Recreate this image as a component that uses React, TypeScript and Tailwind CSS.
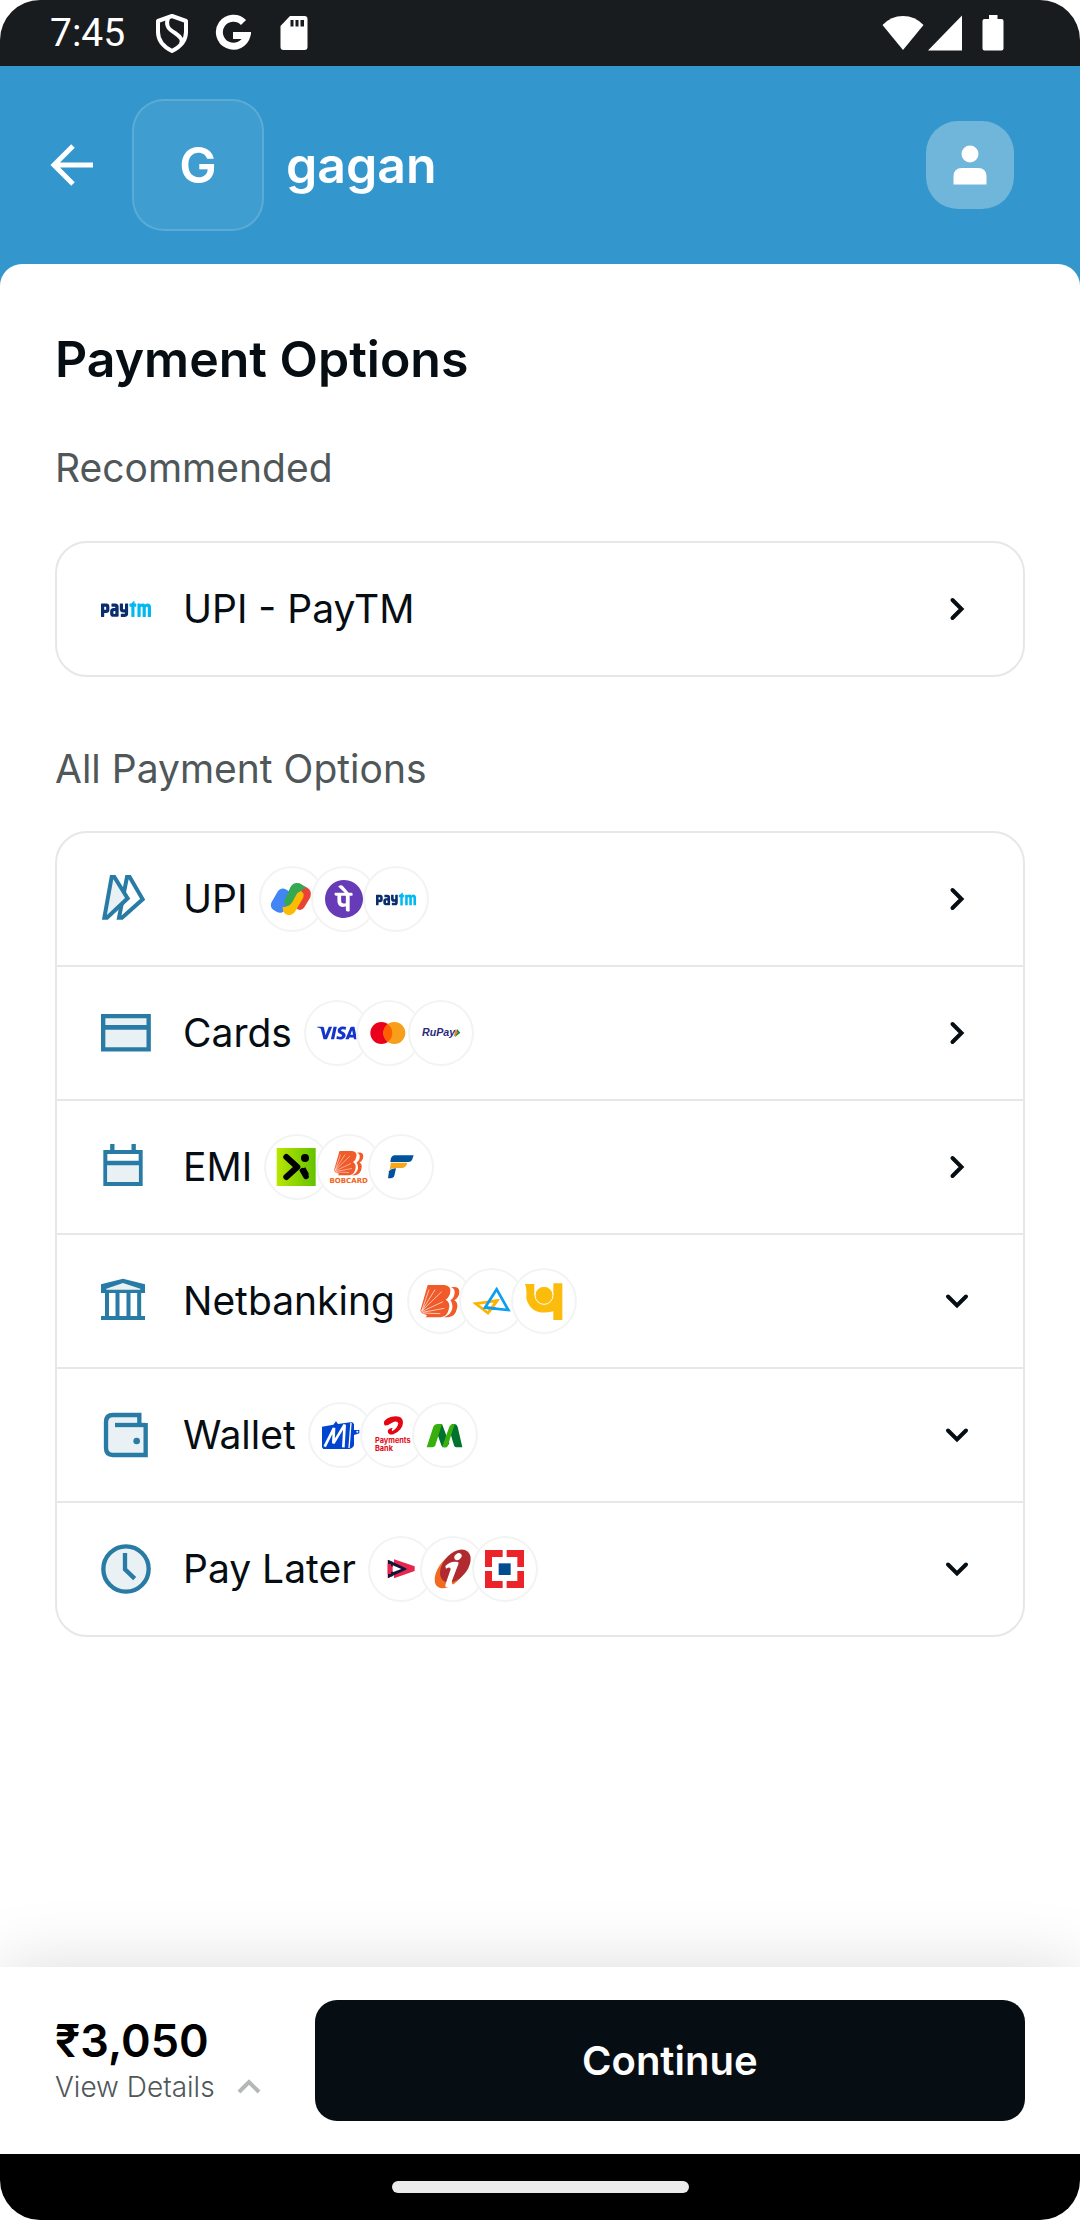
import type { ReactNode } from "react";
import { SiPaytm, SiPhonepe, SiVisa } from "react-icons/si";

const TEAL = "#287ba5";
const TINT = "#e9f1f5";

/* ---------- status bar icons ---------- */

function StatusBar() {
  return (
    <div className="flex h-[66px] items-center justify-between rounded-t-[40px] bg-[#191c1f] pr-[76px] pl-[50px] text-white">
      <div className="flex items-center">
        <span className="font-[Roboto,sans-serif] text-[39px] leading-[44px]">7:45</span>
        <svg className="ml-[30px]" width="34" height="40" viewBox="0 0 34 40" fill="none" stroke="#fff" strokeWidth="4">
          <path d="M17 3 31 8V19C31 28 25 34 17 38 9 34 3 28 3 19V8Z" strokeLinejoin="round" />
          <path d="M13 5C10 14 15 17 20 20 26 24 28 27 26 31" strokeWidth="4" />
        </svg>
        <svg className="ml-[26px]" width="36" height="40" viewBox="0 0 36 40" fill="none" stroke="#fff" strokeWidth="7">
          <path d="M28.500 9.500A14 14 0 1 0 32 22.500H18" />
        </svg>
        <svg className="ml-[29px]" width="28" height="36" viewBox="0 0 28 36">
          <path d="M10 1H24.500Q27.500 1 27.500 4V32Q27.500 35 24.500 35H3.500Q.5 35 .5 32V11Z" fill="#fff" />
          <path d="M10.500 5H13.500V11.500H10.500ZM15.500 5H18.500V11.500H15.500ZM20.500 5H24V11.500H20.500Z" fill="#191c1f" />
        </svg>
      </div>
      <div className="flex items-center">
        <svg width="42" height="36" viewBox="0 0 42 36">
          <path d="M21 35 .5 10Q9 1 21 1T41.500 10Z" fill="#fff" />
        </svg>
        <svg className="ml-1" width="34" height="36" viewBox="0 0 34 36">
          <path d="M34 .5V35.500H0Z" fill="#fff" />
        </svg>
        <svg className="ml-5" width="22" height="36" viewBox="0 0 22 36">
          <path d="M7 0H15.500V4H19.500Q21.500 4 21.500 6V33.500Q21.500 35.500 19.500 35.500H2.500Q.5 35.500 .5 33.500V6Q.5 4 2.500 4H7Z" fill="#fff" />
        </svg>
      </div>
    </div>
  );
}

/* ---------- category icons, 150-unit box ---------- */

function CategoryIcon({ children }: { children: ReactNode }) {
  return (
    <svg className="size-[50px] shrink-0" viewBox="0 0 150 150" fill="none" stroke={TEAL} strokeWidth="12" aria-hidden="true">
      {children}
    </svg>
  );
}

const upiIcon = (
  <CategoryIcon>
    <path d="M78 9H86L125 76 63 131H54Z" fill="#fff" />
    <path d="M32 9H40L80 73 18 131H10Z" fill={TINT} />
  </CategoryIcon>
);
const cardIcon = (
  <CategoryIcon>
    <path d="M6.500 24.500H143V124H6.500Z" fill={TINT} strokeWidth="13" />
    <path d="M6 58H143" strokeWidth="14" />
  </CategoryIcon>
);
const calendarIcon = (
  <CategoryIcon>
    <path d="M13 30H119V126H13Z" fill="#fff" />
    <path d="M19 64H113V120H19Z" fill={TINT} stroke="none" />
    <path d="M13 63H119M34 6V30M98 6V30" strokeWidth="13" />
  </CategoryIcon>
);
const bankIcon = (
  <CategoryIcon>
    <path d="M18 48H115V120H18Z" fill="#fff" stroke="none" />
    <path d="M0 25 66 8 132 25V51H0Z" fill={TEAL} stroke="none" />
    <path d="M16 41V38L66 21 118 38V41Z" fill={TINT} stroke="none" />
    <path d="M0 126H132M18 48V122M49.500 48V122M82.500 48V122M114.500 48V122" />
  </CategoryIcon>
);
const walletIcon = (
  <CategoryIcon>
    <path d="M114 48V15H36Q15 15 15 36V114Q15 135 36 135H134V48Z" fill={TINT} stroke="none" />
    <path d="M115 48V15H36Q15 15 15 36V114Q15 135 36 135H134V39" strokeWidth="13" />
    <path d="M134 45H42" strokeWidth="13" />
    <circle cx="107" cy="93" r="10" fill={TEAL} stroke="none" />
  </CategoryIcon>
);
const clockIcon = (
  <CategoryIcon>
    <circle cx="75" cy="75" r="68" fill={TINT} strokeWidth="13" />
    <path d="M72 27V76L101 104" strokeWidth="13" />
  </CategoryIcon>
);

/* ---------- brand logos, 198-unit box inside a ringed circle ---------- */

/* Two-tone fill shared by every Paytm wordmark on the page. */
function PaytmTones() {
  return (
    <svg className="absolute size-0" aria-hidden="true">
      <defs>
        <linearGradient id="paytm-tones" x1="0" x2="1" y1="0" y2="0">
          <stop offset=".55" stopColor="#0a2d6e" />
          <stop offset=".55" stopColor="#00b9f1" />
        </linearGradient>
      </defs>
    </svg>
  );
}

function Paytm({ size }: { size: number }) {
  return <SiPaytm size={size} fill="url(#paytm-tones)" stroke="none" aria-hidden="true" />;
}

function Logo({ children }: { children: ReactNode }) {
  return (
    <svg className="size-[66px]" viewBox="0 0 198 198" aria-hidden="true">
      {children}
    </svg>
  );
}

const gpay = (
  <Logo>
    <rect x="44" y="68" width="46" height="72" rx="17" transform="rotate(30 67 104)" fill="#4285f4" />
    <path d="M112 62 120 52 146 66Q160 76 154 94L137 122Q129 136 116 130 108 124 113 114L128 84Q130 72 112 62Z" fill="#ea4335" />
    <path d="M76 104 94 64Q103 47 121 52L144 66Q128 66 120 84L104 114 88 122Q74 118 76 104Z" fill="#34a853" />
    <path d="M71 123Q90 124 100 108L113 84Q120 74 130 79 137 85 132 96L109 136Q100 150 84 146 70 140 71 123Z" fill="#fbbc04" />
  </Logo>
);

const phonepe = <SiPhonepe size={38} color="#673ab7" stroke="none" aria-hidden="true" />;
const paytm = <Paytm size={40} />;
const visa = <SiVisa size={40} color="#1434cb" stroke="none" aria-hidden="true" />;

const mastercard = (
  <Logo>
    <circle cx="76" cy="99" r="33" fill="#eb001b" />
    <circle cx="115" cy="99" r="33" fill="#f79e1b" />
    <path d="M95.500 72.500A33 33 0 0 1 95.500 125.500 33 33 0 0 1 95.500 72.500Z" fill="#ff5f00" />
  </Logo>
);

const rupay = (
  <Logo>
    <text x="42" y="109" fontFamily="Liberation Sans, sans-serif" fontSize="32" fontWeight="700" fontStyle="italic" fill="#2a2a7c">
      RuPay
    </text>
    <path d="M147 87 157 98 141 111Z" fill="#0e8a43" />
    <path d="M143 87 150 98 137 111Z" fill="#f47b20" />
  </Logo>
);

const axio = (
  <Logo>
    <defs>
      <linearGradient id="lime" x1="0" x2="1">
        <stop offset="0" stopColor="#b9e700" />
        <stop offset="1" stopColor="#64c200" />
      </linearGradient>
    </defs>
    <rect x="38" y="42" width="117" height="114" fill="url(#lime)" />
    <path d="M67 69 100 99 67 129" fill="none" stroke="#000" strokeWidth="18" strokeLinecap="round" strokeLinejoin="round" />
    <circle cx="123" cy="72" r="12" fill="#000" />
    <path d="M116 110 126 127" stroke="#000" strokeWidth="17" strokeLinecap="round" />
    <path d="M106 110 124 100 136 122Z" fill="#000" />
  </Logo>
);

/* Two overlapping slanted letters with a sunburst at the lower left. */
function BarodaSun() {
  return (
    <>
      <path d="M92 7Q118 2 117 22 116 38 102 46 114 52 110 70 106 94 84 97H70Q92 90 96 70 97 54 90 46 104 36 103 20 102 10 92 7Z" fill="#f15a29" />
      <path d="M22 0H72Q92 2 90 20 88 36 76 44 90 52 86 70 82 94 62 97H16L20 91 5 85 0 77Z" fill="#f15a29" />
      <path d="M4 78 26 14M4 78 44 14M4 78 64 20M4 80 68 50M6 82 72 70M8 84 60 86" stroke="#fff" strokeWidth="2" />
    </>
  );
}

const bobcard = (
  <Logo>
    <g transform="translate(54 51) scale(.75)">
      <BarodaSun />
    </g>
    <text x="98" y="147" textAnchor="middle" fontFamily="DejaVu Sans, sans-serif" fontSize="21" fontWeight="700" fill="#f26522">
      BOBCARD
    </text>
  </Logo>
);

const federal = (
  <Logo>
    <path d="M78 64H137L132 78Q129 84 121 84H67Q68 66 78 64Z" fill="#00529b" />
    <path d="M69 86H118Q114 102 100 102H80Q68 102 64 112Z" fill="#faa61a" />
    <path d="M63 112Q70 103 84 103L79 125Q76 134 60 133Z" fill="#00529b" />
  </Logo>
);

const baroda = (
  <Logo>
    <g transform="translate(40 51)">
      <BarodaSun />
    </g>
  </Logo>
);

const canara = (
  <Logo>
    <path d="M50 107 114 98 87 135Z" fill="none" stroke="#ffb300" strokeWidth="8" />
    <path d="M113 64 78 119 148 126Z" fill="none" stroke="#0a9ff0" strokeWidth="8" />
    <path d="M90 131 114 98 98 100" fill="none" stroke="#ffb300" strokeWidth="8" />
    <path d="M82 119 110 122" stroke="#0a9ff0" strokeWidth="8" />
  </Logo>
);

const pnb = (
  <Logo>
    <path d="M42 48H70V80A29 29 0 0 0 127 80V46H154V156H127V130Q62 146 46 92 48 62 42 48Z" fill="#fbbc0b" />
    <circle cx="99" cy="82" r="27" fill="#fbbc0b" stroke="#fff" strokeWidth="3" />
  </Logo>
);

const mobikwik = (
  <Logo>
    <path d="M42 74 76 68 84 58 90 66 132 60 138 66V130Q134 140 124 141H46L42 136Z" fill="#0044cf" />
    <path d="M50 134 78 78 76 124 110 68 106 136" fill="none" stroke="#fff" strokeWidth="8" />
    <path d="M129 62 123 138" stroke="#fff" strokeWidth="4" />
    <path d="M136 84H154V94L136 100Z" fill="#0044cf" />
    <circle cx="148" cy="89" r="3" fill="#fff" />
  </Logo>
);

const airtel = (
  <Logo>
    <path
      d="M72 66Q68 54 92 45 128 36 129 62 128 84 100 97 86 100 83 89 84 78 98 78 94 84 96 88 112 80 115 64 112 54 96 62 82 72 74 70Z"
      fill="#e40613"
    />
    <g fontFamily="Inter, sans-serif" fontSize="22" fontWeight="700" fill="#e40613">
      <text x="45" y="123">Payments</text>
      <text x="45" y="147">Bank</text>
    </g>
  </Logo>
);

const greenM = (
  <Logo>
    <path d="M78 66H90L112 124 104 136H96Q90 136 88 130L72 84Z" fill="#00722f" />
    <path d="M120 66H128Q134 66 137 74L151 136H132Q128 136 126 130L112 84Z" fill="#00722f" />
    <path d="M44 136 64 74Q67 66 76 66H90L70 130Q68 136 60 136Z" fill="#37b00c" />
    <path d="M90 136 112 74Q115 66 124 66H128L108 130Q106 136 98 136Z" fill="#37b00c" />
  </Logo>
);

const lazypay = (
  <Logo>
    <path d="M59 72 74 77V121L59 127ZM78 70 140 91V105L78 127V114L118 99 78 84Z" fill="#e8254f" />
    <path d="M60 71 119 99 60 126V112L74 106V92L60 86ZM74 88V109L100 99Z" fill="#151338" fillRule="evenodd" />
    <path d="M59 84H69V114H59Z" fill="#e8254f" />
  </Logo>
);

const icici = (
  <Logo>
    <ellipse cx="94" cy="102" rx="36" ry="65" transform="rotate(40 94 102)" fill="#f26a21" />
    <ellipse cx="106" cy="90" rx="36" ry="57" transform="rotate(40 106 90)" fill="#b02a30" />
    <ellipse cx="114" cy="62" rx="12" ry="9" transform="rotate(-40 114 62)" fill="#fff" />
    <path d="M76 90Q92 74 114 78 118 82 112 92L96 134Q94 146 102 146 92 154 78 154 74 150 78 140L92 100Q92 90 78 98Z" fill="#fff" />
  </Logo>
);

const hdfc = (
  <Logo>
    <path d="M39 42H156V156H39Z" fill="#ed232a" />
    <path d="M60 63H136V135H60ZM92 42H104V63H92ZM92 135H104V156H92ZM39 93H60V105H39ZM136 93H156V105H136Z" fill="#fff" />
    <path d="M80 82H116V117H80Z" fill="#004c8f" />
  </Logo>
);

/* ---------- page parts ---------- */

function Chevron({ dir }: { dir: "right" | "down" }) {
  return (
    <svg className="ml-auto size-7 shrink-0" viewBox="0 0 28 28" fill="none" stroke="#060e13" strokeWidth="4" strokeLinecap="round" aria-hidden="true">
      <path d={dir === "right" ? "M9.500 5 18.500 14 9.500 23" : "M5 9.500 14 18.500 23 9.500"} />
    </svg>
  );
}

type Option = { label: string; icon: ReactNode; logos: ReactNode[]; dir: "right" | "down" };

const options: Option[] = [
  { label: "UPI", icon: upiIcon, logos: [gpay, phonepe, paytm], dir: "right" },
  { label: "Cards", icon: cardIcon, logos: [visa, mastercard, rupay], dir: "right" },
  { label: "EMI", icon: calendarIcon, logos: [axio, bobcard, federal], dir: "right" },
  { label: "Netbanking", icon: bankIcon, logos: [baroda, canara, pnb], dir: "down" },
  { label: "Wallet", icon: walletIcon, logos: [mobikwik, airtel, greenM], dir: "down" },
  { label: "Pay Later", icon: clockIcon, logos: [lazypay, icici, hdfc], dir: "down" },
];

function OptionRow({ label, icon, logos, dir }: Option) {
  return (
    <button type="button" className="flex h-[132px] w-full items-center pr-[52px] pl-11 text-left">
      {icon}
      <span className="ml-8 text-[39px] leading-[48px] text-[#060e13]">{label}</span>
      {logos.length > 0 && (
        <span className="ml-3 flex">
          {logos.map((logo, i) => (
            <span
              key={i}
              className="-ml-3.5 flex size-[66px] items-center justify-center rounded-full bg-white inset-ring-2 inset-ring-[#f2f3f3] first:ml-0"
            >
              {logo}
            </span>
          ))}
        </span>
      )}
      <Chevron dir={dir} />
    </button>
  );
}

export default function App() {
  return (
    <div className="flex min-h-screen flex-col bg-white font-[Inter,sans-serif]">
      <PaytmTones />
      <StatusBar />

      <header className="flex h-[198px] items-center bg-[#3397cd] pr-[66px] pl-[50px] text-white">
        <button type="button" aria-label="Back">
          <svg width="44" height="44" viewBox="0 0 44 44" fill="none" stroke="#fff" strokeWidth="5">
            <path d="M23 3 4 22 23 41M4 22H43" />
          </svg>
        </button>
        <div className="ml-[38px] flex size-[132px] items-center justify-center rounded-[32px] border-2 border-white/15 bg-white/6 text-[50px] leading-[60px] font-semibold">
          G
        </div>
        <div className="ml-[22px] text-[50px] leading-[60px] font-semibold">gagan</div>
        <button type="button" aria-label="Account" className="ml-auto flex size-[88px] items-center justify-center rounded-[32px] bg-[#70b5da]">
          <svg width="34" height="40" viewBox="0 0 34 40" fill="#fff">
            <circle cx="17" cy="9" r="8.500" />
            <path d="M.5 39.500V31.500Q.5 23 9 23H25Q33.500 23 33.500 31.500V39.500Z" />
          </svg>
        </button>
      </header>

      <main className="flex flex-1 flex-col bg-[#3397cd]">
        <div className="flex-1 rounded-t-[22px] bg-white px-[55px] pt-[63px]">
          <h1 className="text-[50px] leading-[64px] font-semibold text-[#060e13]">Payment Options</h1>

          <h2 className="mt-[53px] text-[39px] leading-[48px] text-[#4f5759]">Recommended</h2>
          <div className="mt-[49px] rounded-[32px] border-2 border-[#e6e7e7]">
            <OptionRow label="UPI - PayTM" icon={<Paytm size={50} />} logos={[]} dir="right" />
          </div>

          <h2 className="mt-[68px] text-[39px] leading-[48px] text-[#4f5759]">All Payment Options</h2>
          <ul className="mt-[38px] divide-y-2 divide-[#e6e7e7] rounded-[32px] border-2 border-[#e6e7e7]">
            {options.map((o) => (
              <li key={o.label}>
                <OptionRow {...o} />
              </li>
            ))}
          </ul>
        </div>
      </main>

      <footer className="shadow-[0_0_66px_rgba(0,0,0,0.14)]">
        <div className="flex h-[187px] items-center gap-[54px] bg-white px-[55px]">
          <div>
            <div className="text-[45px] leading-[52px] font-semibold text-black">₹3,050</div>
            <button type="button" className="flex items-center gap-[22px] text-[28px] leading-[40px] font-light text-[#4f5759]">
              View Details
              <svg width="24" height="18" viewBox="0 0 24 18" fill="none" stroke="#b4b6b8" strokeWidth="4" aria-hidden="true">
                <path d="M2 14 12 4 22 14" />
              </svg>
            </button>
          </div>
          <button type="button" className="h-[121px] flex-1 rounded-[22px] bg-[#060e13] text-[40px] leading-[52px] font-semibold text-white">
            Continue
          </button>
        </div>
        <div className="flex h-[66px] items-center justify-center rounded-b-[40px] bg-black">
          <div className="h-3 w-[297px] rounded-full bg-[#ebebeb]" />
        </div>
      </footer>
    </div>
  );
}
